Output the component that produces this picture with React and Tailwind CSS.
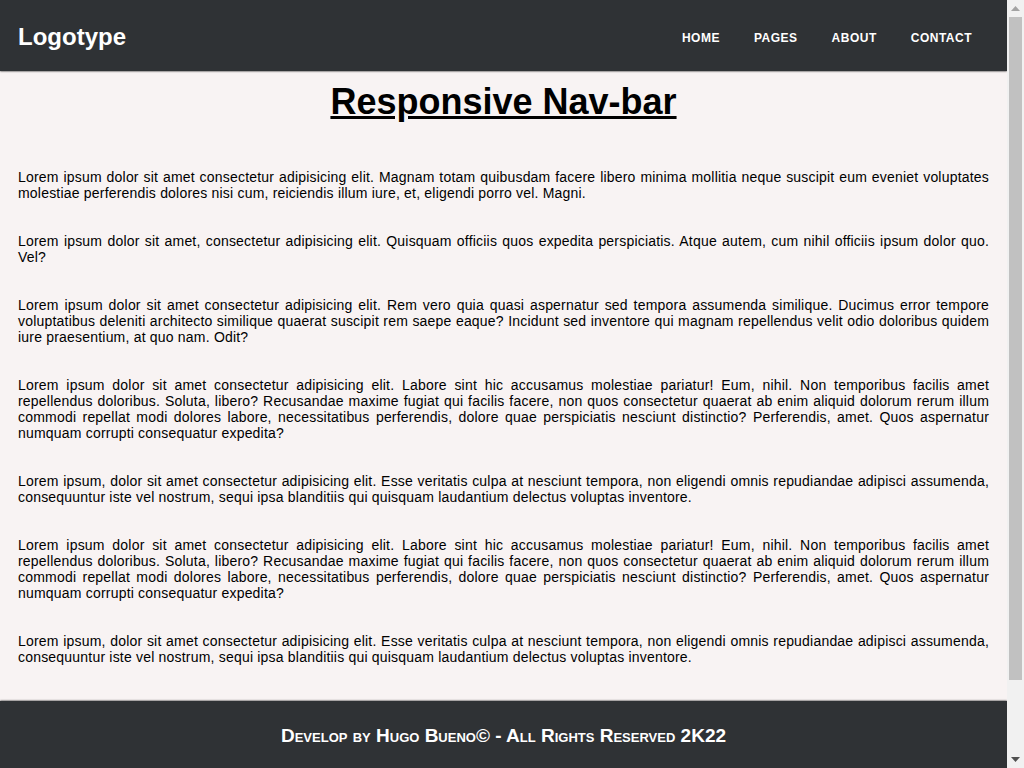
const paragraphs = [
  'Lorem ipsum dolor sit amet consectetur adipisicing elit. Magnam totam quibusdam facere libero minima mollitia neque suscipit eum eveniet voluptates molestiae perferendis dolores nisi cum, reiciendis illum iure, et, eligendi porro vel. Magni.',
  'Lorem ipsum dolor sit amet, consectetur adipisicing elit. Quisquam officiis quos expedita perspiciatis. Atque autem, cum nihil officiis ipsum dolor quo. Vel?',
  'Lorem ipsum dolor sit amet consectetur adipisicing elit. Rem vero quia quasi aspernatur sed tempora assumenda similique. Ducimus error tempore voluptatibus deleniti architecto similique quaerat suscipit rem saepe eaque? Incidunt sed inventore qui magnam repellendus velit odio doloribus quidem iure praesentium, at quo nam. Odit?',
  'Lorem ipsum dolor sit amet consectetur adipisicing elit. Labore sint hic accusamus molestiae pariatur! Eum, nihil. Non temporibus facilis amet repellendus doloribus. Soluta, libero? Recusandae maxime fugiat qui facilis facere, non quos consectetur quaerat ab enim aliquid dolorum rerum illum commodi repellat modi dolores labore, necessitatibus perferendis, dolore quae perspiciatis nesciunt distinctio? Perferendis, amet. Quos aspernatur numquam corrupti consequatur expedita?',
  'Lorem ipsum, dolor sit amet consectetur adipisicing elit. Esse veritatis culpa at nesciunt tempora, non eligendi omnis repudiandae adipisci assumenda, consequuntur iste vel nostrum, sequi ipsa blanditiis qui quisquam laudantium delectus voluptas inventore.',
  'Lorem ipsum dolor sit amet consectetur adipisicing elit. Labore sint hic accusamus molestiae pariatur! Eum, nihil. Non temporibus facilis amet repellendus doloribus. Soluta, libero? Recusandae maxime fugiat qui facilis facere, non quos consectetur quaerat ab enim aliquid dolorum rerum illum commodi repellat modi dolores labore, necessitatibus perferendis, dolore quae perspiciatis nesciunt distinctio? Perferendis, amet. Quos aspernatur numquam corrupti consequatur expedita?',
  'Lorem ipsum, dolor sit amet consectetur adipisicing elit. Esse veritatis culpa at nesciunt tempora, non eligendi omnis repudiandae adipisci assumenda, consequuntur iste vel nostrum, sequi ipsa blanditiis qui quisquam laudantium delectus voluptas inventore.'
];

const links = ['Home', 'Pages', 'About', 'Contact'];

// the browser's own scrollbar, drawn over the right edge
function Scrollbar() {
  return (
    <div className="fixed right-0 top-0 z-20 flex h-screen w-[17px] flex-col bg-[#f1f1f1]">
      <div className="flex h-[17px] items-center justify-center">
        <svg width="9" height="5" viewBox="0 0 9 5"><path d="M4.5 0L9 5H0z" fill="#a3a3a3" /></svg>
      </div>
      <div className="flex-1 px-[2px]">
        <div className="h-[663px] bg-[#c1c1c1]" />
      </div>
      <div className="flex h-[17px] items-center justify-center">
        <svg width="9" height="5" viewBox="0 0 9 5"><path d="M0 0H9L4.5 5z" fill="#505050" /></svg>
      </div>
    </div>
  );
}

export default function App() {
  return (
    <div className="min-h-screen bg-[#f8f3f3]">
      <div className="w-[1007px] font-['Liberation_Sans',Arial,sans-serif] text-black">
        <header className="relative z-10 flex h-[71px] items-center justify-between bg-[#2f3235] px-[18px] pt-[2px] shadow-[0_0_2px_#000]">
          <a href="#" className="text-[24px] font-bold text-white">Logotype</a>
          <nav className="flex pt-[2px]">
            {links.map((link) => (
              <a
                key={link}
                href="#"
                className="px-[17px] text-[12px] font-bold uppercase tracking-[0.5px] text-white"
              >
                {link}
              </a>
            ))}
          </nav>
        </header>

        <main className="px-[18px] pb-[36px]">
          <h1 className="pt-[4px] text-center text-[36px] font-bold underline">Responsive Nav-bar</h1>
          <div className="mt-[40px] flex flex-col gap-[32px]">
            {paragraphs.map((text, i) => (
              <p key={i} className="text-justify text-[14px] leading-[16px] tracking-[0.2px]">{text}</p>
            ))}
          </div>
        </main>

        <footer className="h-[148px] bg-[#2f3235] pt-[21px] text-center shadow-[0_0_2px_#000]">
          <p className="text-[19px] font-bold text-white [font-variant:small-caps]">
            Develop by Hugo Bueno© - All Rights Reserved 2K22
          </p>
        </footer>
      </div>
      <Scrollbar />
    </div>
  );
}
